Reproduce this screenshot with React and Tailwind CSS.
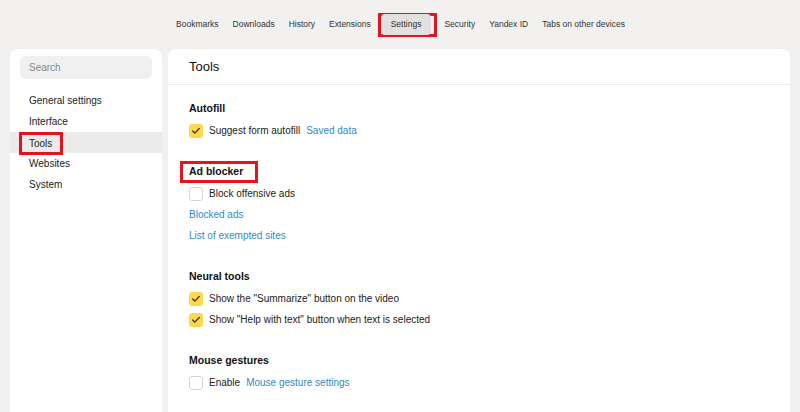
import { Check } from "lucide-react";

const navItems = ["Bookmarks", "Downloads", "History", "Extensions", "Settings", "Security", "Yandex ID", "Tabs on other devices"];
const sideItems = ["General settings", "Interface", "Tools", "Websites", "System"];

function Box({ checked }) {
  return checked ? (
    <span className="flex h-[14px] w-[14px] items-center justify-center rounded-[3px] bg-[#fcd84c]">
      <Check size={10} strokeWidth={3} className="text-[#3a2f10]" />
    </span>
  ) : (
    <span className="h-[14px] w-[14px] rounded-[3px] border border-[#d6d6d6] bg-white" />
  );
}

function Row({ checked, label, link }) {
  return (
    <div className="flex h-[21px] items-center gap-[6px]">
      <Box checked={checked} />
      <span>{label}</span>
      {link && <a className="text-[#2f8ac4]">{link}</a>}
    </div>
  );
}

function Section({ title, boxed, children }) {
  return (
    <div className="mb-[20px]">
      <div className="flex h-[22px] items-center">
        {boxed ? (
          <span className="-ml-[9px] flex h-[22px] items-center border-[3px] border-[#e3141c] pl-[6px] pr-[12px] text-[10.5px] font-bold text-[#111]">
            {title}
          </span>
        ) : (
          <h3 className="text-[10.5px] font-bold text-[#111]">{title}</h3>
        )}
      </div>
      {children}
    </div>
  );
}

export default function App() {
  return (
    <div className="flex h-[412px] flex-col overflow-hidden bg-[#f2f1ef] font-['Liberation_Sans',Arial,sans-serif] text-[10px] text-[#222]">
      <nav className="flex h-[49px] shrink-0 items-center justify-center pl-[1px] text-[8.5px] text-[#333]">
        {navItems.map((n) =>
          n === "Settings" ? (
            <span key={n} className="flex h-[24px] items-center border-[3px] border-[#e3141c] pr-[3px]">
              <span className="rounded-[4px] bg-[#e2e1df] px-[10px] py-[4px]">{n}</span>
            </span>
          ) : (
            <span key={n} className="px-[7px]">{n}</span>
          )
        )}
      </nav>
      <div className="flex min-h-0 flex-1 gap-[6px] px-[10px]">
        <aside className="w-[152px] rounded-t-[8px] bg-white pt-[7px]">
          <div className="mx-[10px] mb-[11px] flex h-[23px] items-center rounded-[6px] bg-[#f0f0f0] px-[9px] text-[#888]">Search</div>
          {sideItems.map((s) =>
            s === "Tools" ? (
              <div key={s} className="flex h-[21px] items-start bg-[#ebebeb] pl-[9px]">
                <span className="flex h-[23px] items-center border-[3px] border-[#e3141c] pl-[7px] pr-[8px]">{s}</span>
              </div>
            ) : (
              <div key={s} className="flex h-[21px] items-center pl-[19px]">{s}</div>
            )
          )}
        </aside>
        <main className="w-[622px] overflow-hidden rounded-t-[8px] bg-white">
          <div className="flex h-[36px] items-center border-b border-[#ebebeb] px-[21px] text-[13px] text-[#111]">Tools</div>
          <div className="px-[21px] pt-[13px]">
            <Section title="Autofill">
              <Row checked label="Suggest form autofill" link="Saved data" />
            </Section>
            <Section title="Ad blocker" boxed>
              <Row label="Block offensive ads" />
              <div className="flex h-[21px] items-center text-[#2f8ac4]">Blocked ads</div>
              <div className="flex h-[21px] items-center text-[#2f8ac4]">List of exempted sites</div>
            </Section>
            <Section title="Neural tools">
              <Row checked label={'Show the "Summarize" button on the video'} />
              <Row checked label={'Show "Help with text" button when text is selected'} />
            </Section>
            <Section title="Mouse gestures">
              <Row label="Enable" link="Mouse gesture settings" />
            </Section>
          </div>
        </main>
      </div>
    </div>
  );
}
